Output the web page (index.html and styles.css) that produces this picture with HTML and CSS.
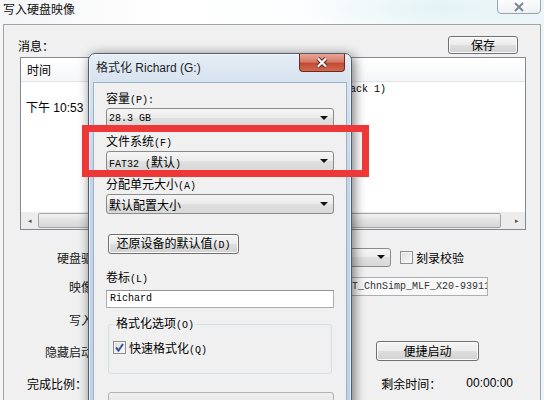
FILE: index.html
```html
<!DOCTYPE html>
<html lang="zh-CN">
<head>
  <meta charset="UTF-8">
  <title>写入硬盘映像</title>
  <link rel="stylesheet" href="styles.css">
</head>
<body>
  <div class="window">
    <div class="titlebar">
      <span class="title">写入硬盘映像</span>
      <span class="close-small">
        <svg width="12" height="10" viewBox="0 0 12 10"><path d="M2 1 L10 9 M10 1 L2 9" stroke="#7d8692" stroke-width="2"/></svg>
      </span>
    </div>

    <div class="panel">
      <div class="msg-head">
        <span>消息：</span>
        <button class="btn save-btn">保存</button>
      </div>

      <div class="listview">
        <div class="lv-header">
          <span class="col-time">时间</span>
        </div>
        <div class="lv-body">
          <div class="lv-row">
            <span class="col-time">下午 10:53</span>
            <div class="col-event mono">
              <div>Writing Master Boot Record (Track 1)</div>
              <div></div>
              <div></div>
            </div>
          </div>
        </div>
        <div class="hscroll">
          <span class="sb-btn">&#9666;</span>
          <span class="sb-thumb"></span>
          <span class="sb-track"></span>
          <span class="sb-btn">&#9656;</span>
        </div>
      </div>

      <div class="form-row row-drive">
        <span class="f-label">硬盘驱动器：</span>
        <div class="combo drive-combo"><span></span><span class="arrow"></span></div>
        <span class="check"></span>
        <span class="check-text">刻录校验</span>
      </div>
      <div class="form-row row-image">
        <span class="f-label">映像文件：</span>
        <div class="edit mono">D:\System\Win7\Windows 7 SP1 x64 ULT_ChnSimp_MLF_X20-93911.iso</div>
      </div>
      <div class="form-row row-mode">
        <span class="f-label">写入方式：</span>
        <div class="combo mode-combo"><span></span><span class="arrow"></span></div>
      </div>
      <div class="form-row row-hide">
        <span class="f-label">隐藏启动分区：</span>
        <div class="combo mode-combo"><span></span><span class="arrow"></span></div>
        <button class="btn quick-btn">便捷启动</button>
      </div>
      <div class="form-row row-status">
        <span>完成比例：</span>
        <span class="remain">剩余时间：</span>
        <span class="time-value">00:00:00</span>
      </div>
    </div>
  </div>

  <div class="dialog">
    <div class="dlg-title">
      <span class="dlg-caption">格式化 Richard (G:)</span>
      <span class="dlg-close">
        <svg width="14" height="11" viewBox="0 0 14 11">
          <path d="M3 1.5 L11 9.5 M11 1.5 L3 9.5" stroke="#5a2a24" stroke-width="4"/>
          <path d="M3 1.5 L11 9.5 M11 1.5 L3 9.5" stroke="#ffffff" stroke-width="2.2"/>
        </svg>
      </span>
    </div>
    <div class="dlg-client">
      <div class="d-label">容量<span class="sl">(P):</span></div>
      <div class="combo"><span class="mono">28.3 GB</span><span class="arrow"></span></div>

      <div class="d-label gap">文件系统<span class="sl">(F)</span></div>
      <div class="combo"><span><span class="mono">FAT32 (</span>默认<span class="mono">)</span></span><span class="arrow"></span></div>

      <div class="d-label gap">分配单元大小<span class="sl">(A)</span></div>
      <div class="combo"><span>默认配置大小</span><span class="arrow"></span></div>

      <button class="btn restore-btn">还原设备的默认值<span class="sl">(D)</span></button>

      <div class="d-label vol-label">卷标<span class="sl">(L)</span></div>
      <div class="text-box mono">Richard</div>

      <fieldset class="options">
        <legend>格式化选项<span class="sl">(O)</span></legend>
        <div class="opt-row">
          <span class="check checked">
            <svg width="11" height="11" viewBox="0 0 11 11"><path d="M2 5.5 L4.5 8.5 L9 2" fill="none" stroke="#3c5594" stroke-width="2"/></svg>
          </span>
          <span>快速格式化<span class="sl">(Q)</span></span>
        </div>
      </fieldset>

      <div class="progress"></div>
    </div>
  </div>

  <div class="highlight"></div>
</body>
</html>
```

FILE: styles.css
```css
body {
  margin: 0;
  width: 544px;
  height: 400px;
  overflow: hidden;
  position: relative;
  font-family: "Liberation Sans", "Noto Sans CJK SC", sans-serif;
  font-size: 12px;
  color: #000;
  background: radial-gradient(ellipse 140px 30px at 440px 8px, #e4f3f6, rgba(255, 255, 255, 0)),
              linear-gradient(90deg, #f4f5f7, #ffffff 30%, #fbfdfe 70%, #eef5f8);
}

.mono {
  font-family: "Liberation Mono", monospace;
  font-size: 10px;
}

.sl {
  font-family: "Liberation Mono", monospace;
  font-size: 10px;
}

/* back window */

.titlebar {
  height: 24px;
  display: flex;
  justify-content: space-between;
  align-items: flex-start;
}

.title {
  padding: 2px 0 0 3px;
  line-height: 16px;
  color: #111;
}

.close-small {
  width: 44px;
  height: 18px;
  margin: -4px 3px 0 0;
  border: 1px solid #99a4b0;
  border-radius: 0 0 4px 4px;
  background: linear-gradient(#ffffff, #eef1f4);
  display: flex;
  align-items: center;
  justify-content: center;
  padding-top: 3px;
  box-sizing: border-box;
}

.panel {
  margin: 0 3px;
  height: 376px;
  border: 1px solid #a3a3a3;
  background: #f0f0f0;
}

.msg-head {
  display: flex;
  justify-content: space-between;
  align-items: center;
  height: 18px;
  margin: 11px 22px 0 14px;
}

.btn {
  font-family: "Noto Sans CJK SC", sans-serif;
  font-size: 12px;
  line-height: 16px;
  padding: 0;
  color: #000;
  border: 1px solid #707070;
  border-radius: 3px;
  background: linear-gradient(#f4f4f4, #ececec 50%, #dedede 50%, #d2d2d2);
  box-shadow: inset 0 0 0 1px #fbfbfb;
}

.save-btn {
  width: 70px;
  height: 18px;
}

.listview {
  margin: 3px 14px 0 16px;
  height: 173px;
  box-sizing: border-box;
  border: 1px solid #828790;
  background: #fff;
  display: flex;
  flex-direction: column;
}

.lv-header {
  height: 23px;
  border-bottom: 1px solid #e2e3e5;
  background: linear-gradient(#ffffff, #f6f7f9);
  display: flex;
  align-items: center;
  flex-shrink: 0;
}

.lv-header .col-time {
  width: 143px;
  padding-left: 6px;
}

.lv-body {
  flex: 1;
}

.lv-row {
  display: flex;
  align-items: center;
}

.lv-row .col-time {
  width: 144px;
  padding-left: 5px;
}

.lv-row .col-event {
  line-height: 16px;
  white-space: nowrap;
}

.lv-row .col-event div {
  height: 16px;
}

.hscroll {
  height: 17px;
  display: flex;
  background: #ececec;
  flex-shrink: 0;
}

.sb-btn {
  width: 17px;
  font-size: 7px;
  color: #555;
  display: flex;
  align-items: center;
  justify-content: center;
}

.sb-thumb {
  width: 463px;
  margin: 1px 0;
  border: 1px solid #a5a5a5;
  border-radius: 2px;
  background: linear-gradient(#f3f3f3, #e2e2e2 50%, #d6d6d6);
  box-sizing: border-box;
}

.sb-track {
  flex: 1;
}

.form-row {
  display: flex;
  align-items: center;
  height: 24px;
  font-family: "Noto Sans CJK SC", sans-serif;
}

.f-label {
  width: 125px;
  text-align: right;
  margin-right: 6px;
  color: #1a1a1a;
}

.row-drive {
  margin-top: 15px;
}

.row-image {
  margin-top: 5px;
}

.row-mode {
  margin-top: 9px;
}

.row-hide {
  margin-top: 8px;
}

.row-status {
  margin-top: 8px;
  padding-left: 23px;
}

.combo {
  display: flex;
  align-items: center;
  justify-content: space-between;
  height: 20px;
  box-sizing: border-box;
  border: 1px solid #8b8b8b;
  border-radius: 3px;
  background: linear-gradient(#f5f5f5, #ececec 50%, #e0e0e0 50%, #d8d8d8);
  padding: 0 5px 0 2px;
  font-family: "Noto Sans CJK SC", sans-serif;
  font-size: 12px;
  white-space: nowrap;
}

.arrow {
  width: 0;
  height: 0;
  border-left: 4px solid transparent;
  border-right: 4px solid transparent;
  border-top: 4px solid #111;
}

.drive-combo {
  width: 256px;
  height: 19px;
}

.mode-combo {
  width: 150px;
  height: 19px;
}

.check {
  width: 13px;
  height: 13px;
  box-sizing: border-box;
  border: 1px solid #8f8f8f;
  background: linear-gradient(135deg, #dcdcdc, #fbfbfb);
  box-shadow: inset 0 0 0 1px #f4f4f4;
  display: inline-flex;
  align-items: center;
  justify-content: center;
}

.row-drive .check {
  margin-left: 9px;
}

.check-text {
  margin-left: 3px;
}

.edit {
  width: 353px;
  height: 19px;
  box-sizing: border-box;
  border: 1px solid #acaeb4;
  background: #f8f8f8;
  padding-left: 6px;
  line-height: 17px;
  white-space: nowrap;
  overflow: hidden;
  color: #333;
}

.quick-btn {
  width: 103px;
  height: 20px;
  margin-left: 91px;
}

.remain {
  margin-left: auto;
}

.time-value {
  font-family: "Liberation Sans", sans-serif;
  margin: 0 27px 0 25px;
}

/* format dialog */

.dialog {
  position: absolute;
  left: 88px;
  top: 53px;
  width: 264px;
  height: 360px;
  box-sizing: border-box;
  padding: 0 4px;
  border: 1px solid #505e70;
  border-radius: 7px 7px 0 0;
  background: linear-gradient(#e6edf6, #d6e3f0 28px, #c2d5ea 120px, #bcd0e6);
  box-shadow: 2px 2px 12px rgba(0, 0, 0, 0.55), inset 0 0 0 1px rgba(255, 255, 255, 0.6);
  font-family: "Noto Sans CJK SC", sans-serif;
}

.dlg-title {
  height: 28px;
  display: flex;
  justify-content: space-between;
  align-items: flex-start;
}

.dlg-caption {
  align-self: center;
  padding-left: 3px;
  font-family: "Liberation Sans", "Noto Sans CJK SC", sans-serif;
  line-height: 16px;
  color: #1e1e1e;
}

.dlg-close {
  width: 46px;
  height: 18px;
  margin-right: 2px;
  box-sizing: border-box;
  border: 1px solid #6b2b22;
  border-top: none;
  border-radius: 0 0 4px 4px;
  background: linear-gradient(#e9a596, #d77b69 45%, #c24a35 55%, #cf6a4d);
  display: flex;
  align-items: center;
  justify-content: center;
}

.dlg-client {
  height: 330px;
  box-sizing: border-box;
  border: 1px solid #9fb1c6;
  background: #f0f0f0;
  padding: 4px 12px 0;
}

.d-label {
  height: 21px;
  line-height: 21px;
}

.d-label.gap {
  margin-top: 2px;
}

.restore-btn {
  display: block;
  width: 131px;
  height: 20px;
  margin: 20px 0 0 2px;
}

.vol-label {
  margin-top: 12px;
}

.text-box {
  height: 18px;
  margin-top: 3px;
  box-sizing: border-box;
  border: 1px solid #abadb3;
  border-top-color: #8e9196;
  background: #fff;
  padding-left: 3px;
  line-height: 16px;
}

.options {
  margin: 8px 2px 0;
  height: 58px;
  box-sizing: border-box;
  padding: 0 0 0 4px;
  border: 1px solid #d5dfe5;
  border-radius: 3px;
}

.options legend {
  margin-left: 1px;
  padding: 0 2px;
  line-height: 14px;
}

.opt-row {
  display: flex;
  align-items: center;
  gap: 3px;
  height: 16px;
  margin-top: 6px;
}

.progress {
  height: 20px;
  margin: 18px 0 0 2px;
  box-sizing: border-box;
  border: 1px solid #b2b2b2;
  border-radius: 3px;
  background: linear-gradient(#f0f0f0, #dcdcdc);
}

.highlight {
  position: absolute;
  left: 82px;
  top: 125px;
  width: 287px;
  height: 52px;
  box-sizing: border-box;
  border: 7px solid #ee3737;
}
```
